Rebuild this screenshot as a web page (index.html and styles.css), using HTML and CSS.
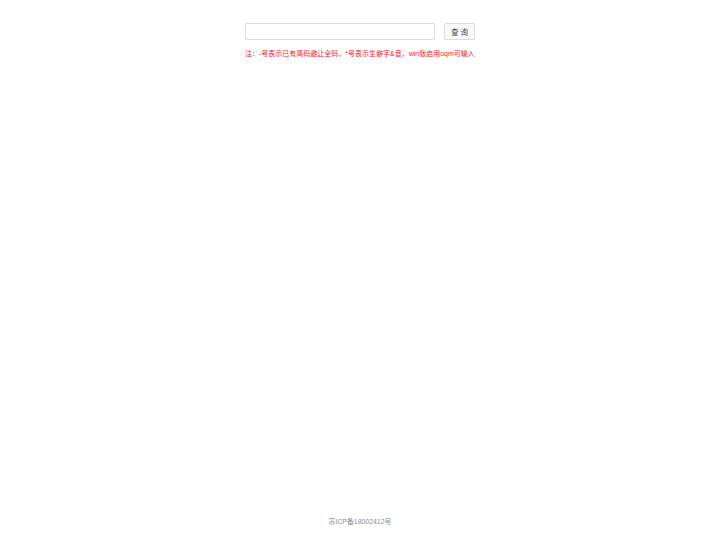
FILE: index.html
```html
<!DOCTYPE html>
<html lang="zh">
<head>
<meta charset="utf-8">
<title>查询</title>
<link rel="stylesheet" href="styles.css">
</head>
<body>
<div class="page">
  <main class="main">
    <form class="search">
      <input class="search-input" type="text">
      <button class="search-btn" type="button">查 询</button>
    </form>
    <p class="note">注：-号表示已有简码避让全码，*号表示生僻字&amp;音，win版启用oqm可输入</p>
  </main>
  <footer class="footer">苏ICP备18002412号</footer>
</div>
</body>
</html>
```
FILE: styles.css
```css
html, body {
  margin: 0;
  padding: 0;
  background: #fff;
}
body {
  font-family: "Liberation Sans", "Noto Sans CJK SC", sans-serif;
}
.page {
  height: 540px;
  display: flex;
  flex-direction: column;
  align-items: center;
}
.main {
  width: 230px;
  padding-top: 23px;
  flex: 1;
}
.search {
  display: flex;
  gap: 9px;
  margin: 0;
}
.search-input {
  box-sizing: border-box;
  width: 190px;
  height: 17px;
  border: 1px solid #dcdcdc;
  border-radius: 2px;
  padding: 0 4px;
  margin: 0;
  background: #fff;
}
.search-btn {
  box-sizing: border-box;
  width: 31px;
  height: 17px;
  border: 1px solid #dcdcdc;
  border-radius: 2px;
  background: #fafafa;
  color: #444;
  font-family: "Liberation Sans", "Noto Sans CJK SC", sans-serif;
  font-size: 7.5px;
  padding: 0;
  margin: 0;
}
.note {
  margin: 9px 0 0;
  color: #f5222d;
  font-size: 7px;
  line-height: 10px;
  white-space: nowrap;
}
.footer {
  color: #8a8f99;
  font-size: 6.9px;
  line-height: 10px;
  padding-bottom: 13px;
}
```
